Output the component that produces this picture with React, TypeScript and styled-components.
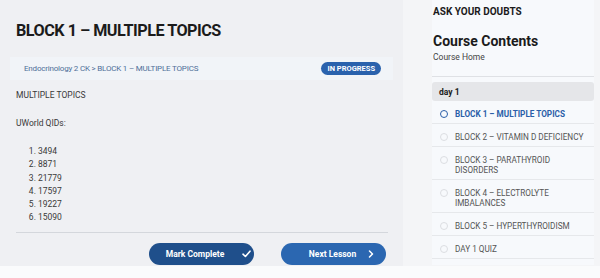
import React from 'react'
import styled, { createGlobalStyle } from 'styled-components'

const GlobalStyle = createGlobalStyle`
  body {
    margin: 0;
    background: #fafbfc;
    font-family: Roboto, 'Open Sans', sans-serif;
    color: #333333;
  }
`

const Page = styled.div`
  display: flex;
  height: 266px;
  background: #f4f5f7;
`

const Main = styled.main`
  width: 403px;
  flex: none;
  box-sizing: border-box;
  background: #eff0f3;
  padding: 19px 15px 0 16px;
`

const Title = styled.h1`
  margin: 0;
  font-size: 16.2px;
  font-weight: 700;
  color: #1b1b1b;
  line-height: 24px;
  letter-spacing: -0.5px;
`

const Crumbs = styled.div`
  margin: 14px -5px 0 -6px;
  height: 23px;
  background: #f1f4f8;
  display: flex;
  align-items: center;
  justify-content: space-between;
  padding: 0 12px 0 14px;
`

const CrumbText = styled.span`
  font-size: 8px;
  letter-spacing: -0.2px;
  color: #4f6f98;
`

const Badge = styled.span`
  background: #2a62ad;
  color: #ffffff;
  font-size: 7.5px;
  font-weight: 700;
  border-radius: 8px;
  padding: 2px 6px;
  line-height: 9px;
`

const Para = styled.p`
  margin: 9px 0 0;
  font-size: 8.5px;
  line-height: 12px;
  color: #3a3a3a;
  & + & {
    margin-top: 16px;
  }
`

const QidList = styled.ol`
  margin: 16px 0 0;
  padding-left: 22px;
  font-size: 8.5px;
  line-height: 13.3px;
  color: #3a3a3a;
`

const Rule = styled.hr`
  margin: 7px 0 0;
  border: 0;
  border-top: 1px solid #d4d7dc;
`

const Actions = styled.div`
  display: flex;
  justify-content: flex-end;
  gap: 27px;
  margin-top: 10px;
  padding-right: 2px;
`

const Button = styled.button<{ $dark?: boolean }>`
  width: 105px;
  height: 22px;
  border: 0;
  border-radius: 11px;
  background: ${p => (p.$dark ? '#1f4f8b' : '#2b67b1')};
  color: #ffffff;
  font-family: inherit;
  font-size: 8.5px;
  font-weight: 700;
  display: flex;
  align-items: center;
  justify-content: center;
  gap: ${p => (p.$dark ? '18px' : '12px')};
  padding: 0 0 0 ${p => (p.$dark ? '14px' : '16px')};
  box-sizing: border-box;
`

const Side = styled.aside`
  margin-left: 29px;
  width: 162px;
  flex: none;
  height: 265px;
  background: #f7f9fc;
`

const Ask = styled.div`
  font-size: 10px;
  font-weight: 700;
  color: #1b1b1b;
  padding: 5px 0 0 1px;
  line-height: 13px;
`

const SideTitle = styled.h2`
  margin: 14px 0 0 1px;
  font-size: 14px;
  font-weight: 700;
  color: #1b1b1b;
  line-height: 18px;
`

const Home = styled.div`
  font-size: 8.5px;
  color: #444444;
  padding-left: 1px;
  line-height: 12px;
  margin-top: 1px;
`

const SideRule = styled.div`
  margin-top: 13px;
  border-top: 1px solid #dfe1e5;
`

const DayHeader = styled.div`
  margin-top: 5px;
  height: 19px;
  background: #e5e6e9;
  border-radius: 3px;
  font-size: 8.5px;
  font-weight: 700;
  color: #1b1b1b;
  display: flex;
  align-items: center;
  padding-left: 7px;
`

const Item = styled.div<{ $active?: boolean }>`
  display: flex;
  align-items: flex-start;
  gap: 7px;
  padding: 7.5px 4px 4.5px 8px;
  border-bottom: 1px solid #e6e8eb;
  font-size: 8.2px;
  line-height: 10px;
  color: ${p => (p.$active ? '#2a5ea8' : '#555555')};
  font-weight: ${p => (p.$active ? 700 : 400)};
`

const Dot = styled.span<{ $active?: boolean }>`
  flex: none;
  width: 6px;
  height: 6px;
  margin-top: 1.2px;
  border-radius: 50%;
  border: 1px solid ${p => (p.$active ? '#2a5ea8' : '#dcdee2')};
`

const items = [
  'BLOCK 1 – MULTIPLE TOPICS',
  'BLOCK 2 – VITAMIN D DEFICIENCY',
  'BLOCK 3 – PARATHYROID DISORDERS',
  'BLOCK 4 – ELECTROLYTE IMBALANCES',
  'BLOCK 5 – HYPERTHYROIDISM',
  'DAY 1 QUIZ'
]

const qids = ['3494', '8871', '21779', '17597', '19227', '15090']

export default function App() {
  return (
    <>
      <GlobalStyle />
      <Page>
        <Main>
          <Title>BLOCK 1 – MULTIPLE TOPICS</Title>
          <Crumbs>
            <CrumbText>Endocrinology 2 CK &gt; BLOCK 1 – MULTIPLE TOPICS</CrumbText>
            <Badge>IN PROGRESS</Badge>
          </Crumbs>
          <Para>MULTIPLE TOPICS</Para>
          <Para>UWorld QIDs:</Para>
          <QidList>
            {qids.map(q => (
              <li key={q}>{q}</li>
            ))}
          </QidList>
          <Rule />
          <Actions>
            <Button $dark>
              Mark Complete
              <svg width="9" height="8" viewBox="0 0 9 8" fill="none">
                <path d="M1 4.2 L3.4 6.5 L8 1.2" stroke="#fff" strokeWidth="1.6" strokeLinecap="round" strokeLinejoin="round" />
              </svg>
            </Button>
            <Button>
              Next Lesson
              <svg width="6" height="8" viewBox="0 0 6 8" fill="none">
                <path d="M1.5 1 L4.5 4 L1.5 7" stroke="#fff" strokeWidth="1.5" strokeLinecap="round" strokeLinejoin="round" />
              </svg>
            </Button>
          </Actions>
        </Main>
        <Side>
          <Ask>ASK YOUR DOUBTS</Ask>
          <SideTitle>Course Contents</SideTitle>
          <Home>Course Home</Home>
          <SideRule />
          <DayHeader>day 1</DayHeader>
          {items.map((t, i) => (
            <Item key={t} $active={i === 0}>
              <Dot $active={i === 0} />
              <span>{t}</span>
            </Item>
          ))}
        </Side>
      </Page>
    </>
  )
}
